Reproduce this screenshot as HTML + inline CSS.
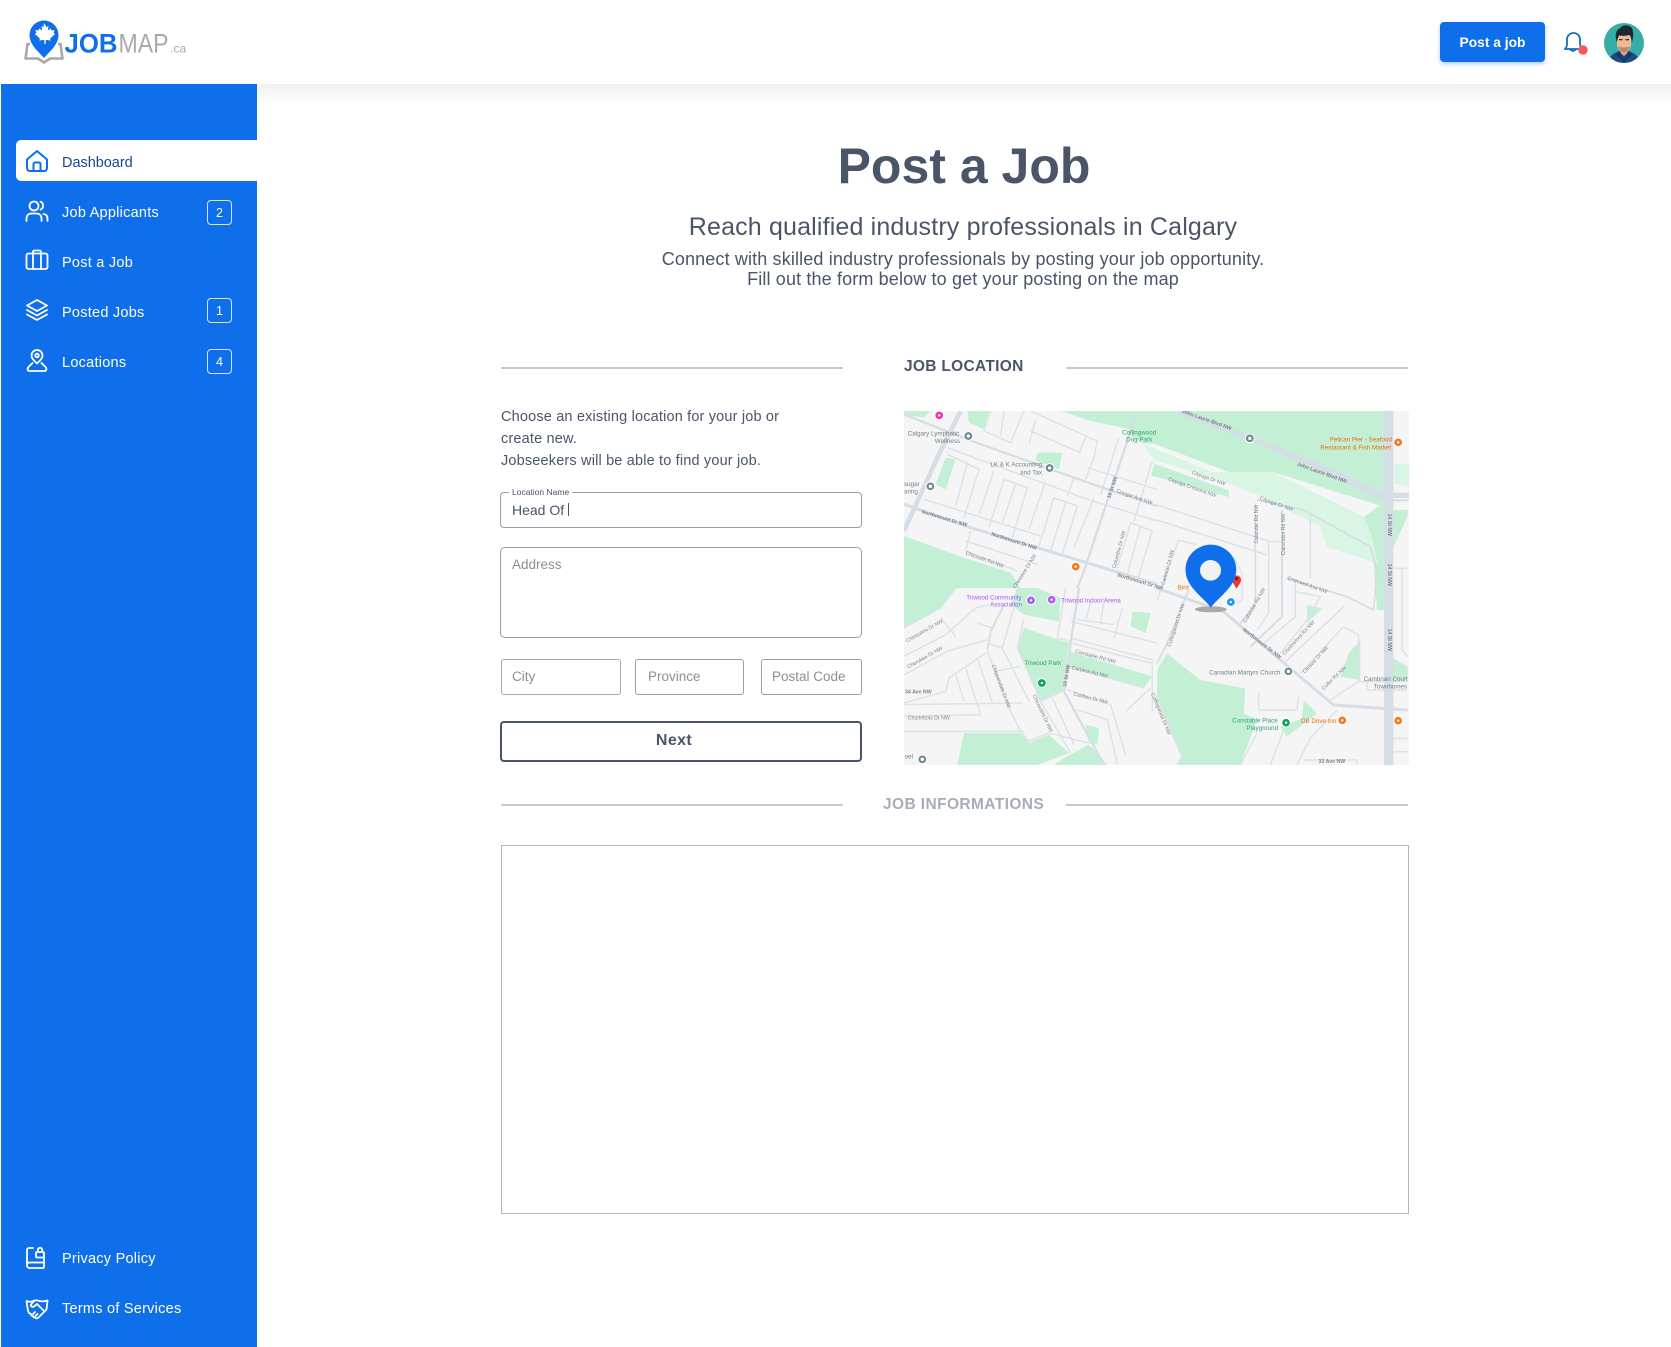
<!DOCTYPE html>
<html lang="en"><head><meta charset="utf-8"><title>Post a Job</title>
<style>
*{box-sizing:border-box}
html,body{margin:0;padding:0;background:#fff}
body{width:1671px;height:1347px;position:relative;overflow:hidden;font-family:"Liberation Sans",sans-serif;color:#4a5568}
.t{position:absolute;white-space:nowrap;line-height:20px;height:20px}
.c{text-align:center}
.nav{color:#fff;font-size:14.5px;left:62px;letter-spacing:.25px}
.badge{position:absolute;left:207px;width:25px;height:25px;border:1.5px solid #d5e5fc;border-radius:4px;color:#fff;font-size:12.5px;text-align:center;line-height:24px}
.ic{position:absolute;left:25px;width:24px;height:24px;fill:none;stroke:#fff;stroke-width:1.8;stroke-linecap:round;stroke-linejoin:round}
.box{position:absolute;border:1.5px solid #9a9fa6;background:#fff}
.ph{color:#8b8f94;font-size:13.5px;letter-spacing:0}
.line{position:absolute;height:2px;background:#c9cacc}
</style></head><body>

<div style="position:absolute;left:257px;right:0;top:84px;height:22px;background:linear-gradient(#f1f1f1,#fff)"></div>
<div style="position:absolute;left:1px;top:84px;width:256px;height:1263px;background:#0f6feb"></div>

<!-- logo -->
<svg style="position:absolute;left:20px;top:15px" width="180" height="55" viewBox="0 0 180 55">
<path d="M10 29H7.500L5.500 43.500 18 43.500 24 47.500 30 43.500 42.500 43.500 40.500 29H38" fill="none" stroke="#a9a9a9" stroke-width="2.600" stroke-linejoin="round"/>
<path d="M24 43C19 37 9.500 30 9.500 20a14.500 14.500 0 0 1 29 0c0 10-9.500 17-14.500 23z" fill="#0f6feb"/>
<path d="M24 8l2.500 4 2-.8-.7 4.300 3-2 .8 2 3-.5-1 3 1.500 1-5 4.500.6 2-5-.6v4h-1.400v-4l-5 .6.600-2-5-4.500 1.500-1-1-3 3 .5.800-2 3 2-.7-4.300 2 .8z" fill="#fff"/>
<text x="44.500" y="37.500" font-family="Liberation Sans" font-weight="700" font-size="27" fill="#0f6feb" textLength="53" lengthAdjust="spacingAndGlyphs">JOB</text>
<text x="98.500" y="37.500" font-family="Liberation Sans" font-size="27" fill="#a9a9a9" textLength="50" lengthAdjust="spacingAndGlyphs">MAP</text>
<text x="150" y="37.500" font-family="Liberation Sans" font-size="12" fill="#a9a9a9">.ca</text>
</svg>

<!-- header right -->
<div style="position:absolute;left:1440px;top:22px;width:105px;height:40px;background:#0f6feb;border-radius:4px;box-shadow:0 2px 4px rgba(15,111,235,.35);color:#fff;font-weight:700;font-size:13.800px;text-align:center;line-height:41px">Post a job</div>
<svg style="position:absolute;left:1559px;top:28px" width="34" height="30" viewBox="0 0 34 30" fill="none" stroke="#0f6fb8" stroke-width="1.800" stroke-linecap="round" stroke-linejoin="round">
<path d="M6 21c1.500-1.500 2-3 2-5v-4.500a6.500 6.500 0 0 1 13 0V16c0 1 .5 2 1.500 3"/><path d="M6 21h13"/><path d="M11.500 21.500a3 3 0 0 0 5 0"/>
<circle cx="24" cy="22" r="4.700" fill="#f8575d" stroke="none"/></svg>
<svg style="position:absolute;left:1604px;top:23px" width="40" height="40" viewBox="0 0 40 40">
<defs><clipPath id="av"><circle cx="20" cy="20" r="20"/></clipPath></defs>
<g clip-path="url(#av)"><rect width="40" height="40" fill="#35aeaa"/>
<path d="M4 40c1-8 7-11 16-13 9 2 15 5 16 13z" fill="#1d4a80"/><path d="M16 25h8l-.5 5-3.500 3-3.500-3z" fill="#e0a988"/>
<path d="M15.500 28l4.500 7 4.500-7 4 2.500-8.500 9.500-8.500-9.500z" fill="#173a68"/>
<path d="M13 11h14v11c0 4-4 7.500-7 7.500s-7-3.500-7-7.500z" fill="#efb995"/><path d="M14 23c1 4 4 6.500 6 6.500s5-2.500 6-6.500c-2 2-10 2-12 0z" fill="#b9876a"/>
<path d="M12.500 19c-2-8 0-13 4-14 1-3 8-3.500 10-1 3 1 3.500 9 1.500 15-.5-3-1-5-2.500-7-4 1-8 1-10.500.5-1 2-1.500 4-2.500 6.500z" fill="#1c2733"/>
<rect x="15" y="16" width="3.500" height="1.300" fill="#3b3030"/><rect x="21.500" y="16" width="3.500" height="1.300" fill="#3b3030"/></g></svg>

<!-- sidebar -->
<div style="position:absolute;left:16px;top:140px;width:241px;height:41px;background:#fff;border-radius:5px 0 0 5px"></div>
<svg class="ic" style="top:149px;stroke:#0f6feb;stroke-width:2" viewBox="0 0 24 24"><path d="M2 10.500L12 2l10 8.500V19a3 3 0 0 1-3 3H5a3 3 0 0 1-3-3z"/><path d="M8.500 22v-7a1.500 1.500 0 0 1 1.500-1.500h4a1.500 1.500 0 0 1 1.500 1.500v7"/></svg>
<div class="t" style="left:62px;top:153px;font-size:14.500px;color:#17478f;letter-spacing:-.03px">Dashboard</div>

<svg class="ic" style="top:199px" viewBox="0 0 24 24"><circle cx="9" cy="7" r="4.500"/><path d="M1.500 22v-2.500c0-3 2-5 5-5h5c3 0 5 2 5 5V22"/><path d="M15.500 2.800c3 .6 3.800 6.200 0 7.800"/><path d="M18.500 15c2.500.4 4 2 4 4.500V22"/></svg>
<div class="t nav" style="top:203px">Job Applicants</div>
<div class="badge" style="top:200px">2</div>

<svg class="ic" style="top:248px" viewBox="0 0 24 24"><rect x="1.500" y="5.500" width="21" height="15.500" rx="2"/><path d="M8 21V4a1.500 1.500 0 0 1 1.500-1.500h5A1.500 1.500 0 0 1 16 4v17"/></svg>
<div class="t nav" style="top:253px">Post a Job</div>

<svg class="ic" style="top:298px" viewBox="0 0 24 24"><path d="M12 2L2 7.500 12 13l10-5.500z"/><path d="M2 12l10 5.500L22 12"/><path d="M2 16.500L12 22l10-5.500"/></svg>
<div class="t nav" style="top:303px">Posted Jobs</div>
<div class="badge" style="top:298px">1</div>

<svg class="ic" style="top:349px" viewBox="0 0 24 24"><path d="M12 14.500c-3-3-5.500-5-5.500-8a5.500 5.500 0 0 1 11 0c0 3-2.500 5-5.500 8z"/><circle cx="12" cy="6.500" r="1.800"/><path d="M7.500 14L3.500 18c-1.500 1.500-1 4 1 4h15c2 0 2.500-2.500 1-4l-4-4"/></svg>
<div class="t nav" style="top:353px">Locations</div>
<div class="badge" style="top:349px">4</div>

<svg class="ic" style="top:1246px;left:24px" viewBox="0 0 24 24"><path d="M9 2H5a2 2 0 0 0-2 2v15.500A2.500 2.500 0 0 0 5.500 22H19a1 1 0 0 0 1-1V9"/><path d="M3 19a2.500 2.500 0 0 1 2.500-2.500H20"/><rect x="12" y="6" width="8" height="5.500" rx="1"/><path d="M13.800 6V4a2.200 2.200 0 0 1 4.400 0v2"/></svg>
<div class="t nav" style="top:1249px">Privacy Policy</div>
<svg class="ic" style="top:1297px" viewBox="0 0 24 24"><path d="M1.500 4c3 1 6 1 8-.5 3-.5 4.500.5 5 .5 2.500.5 5 .5 8-.5l-1 9-8 8c-1 1.300-2.500 1-3 0-1.300.3-2.500-.3-2.500-1.500-1.300 0-2.300-1-2-2-2-.5-2.500-1.500-3-3z"/><path d="M9.500 3.500L6 7.500c-.8 1.500 1.500 3 3 2l3-2.500 7 7"/><path d="M8 17l2-2M10.500 19l2-2"/></svg>
<div class="t nav" style="top:1299px">Terms of Services</div>

<!-- titles -->
<div class="t c" style="left:664px;width:600px;top:137px;height:58px;line-height:58px;font-size:50px;font-weight:700">Post a Job</div>
<div class="t c" style="left:663px;width:600px;top:213px;height:28px;line-height:28px;font-size:25px;letter-spacing:.16px">Reach qualified industry professionals in Calgary</div>
<div class="t c" style="left:563px;width:800px;top:249px;font-size:18px;letter-spacing:.14px">Connect with skilled industry professionals by posting your job opportunity.</div>
<div class="t c" style="left:563px;width:800px;top:269px;font-size:18px;letter-spacing:.14px">Fill out the form below to get your posting on the map</div>

<!-- section heads -->
<div class="line" style="left:501px;top:367px;width:342px"></div>
<div class="line" style="left:1066px;top:367px;width:342px"></div>
<div class="t" style="left:904px;top:357px;font-size:15.500px;font-weight:700;letter-spacing:.3px">JOB LOCATION</div>

<!-- intro -->
<div class="t" style="left:501px;top:407px;font-size:14.500px;letter-spacing:.17px">Choose an existing location for your job or</div>
<div class="t" style="left:501px;top:429px;font-size:14.500px;letter-spacing:.17px">create new.</div>
<div class="t" style="left:501px;top:451px;font-size:14.500px;letter-spacing:.17px">Jobseekers will be able to find your job.</div>

<!-- form -->
<div class="box" style="left:500px;top:492px;width:362px;height:36px;border-radius:4px"></div>
<div class="t" style="left:509px;top:482px;background:#fff;padding:0 3px;font-size:8.500px;color:#4a5568">Location Name</div>
<div class="t" style="left:512px;top:500px;font-size:14px">Head Of</div>
<div style="position:absolute;left:568px;top:503px;width:1px;height:13px;background:#4a5568"></div>
<div class="box" style="left:500px;top:547px;width:362px;height:91px;border-radius:5px"></div>
<div class="t ph" style="left:512px;top:555px">Address</div>
<div class="box" style="left:501px;top:659px;width:120px;height:36px;border-radius:3px;border-color:#aaa"></div>
<div class="t ph" style="left:512px;top:667px">City</div>
<div class="box" style="left:635px;top:659px;width:109px;height:36px;border-radius:3px"></div>
<div class="t ph" style="left:648px;top:667px">Province</div>
<div class="box" style="left:761px;top:659px;width:101px;height:36px;border-radius:3px"></div>
<div class="t ph" style="left:772px;top:667px">Postal Code</div>
<div style="position:absolute;left:500px;top:721px;width:362px;height:41px;border:2.500px solid #4a5568;border-radius:4px"></div>
<div class="t c" style="left:600px;width:148px;top:730.5px;font-size:16px;font-weight:700;letter-spacing:.4px">Next</div>

<!-- map -->
<svg style="position:absolute;left:904px;top:411px;filter:blur(.3px)" width="505" height="354" viewBox="41 32 1491 1062" preserveAspectRatio="none" font-family="Liberation Sans">
<rect x="41" y="32" width="1491" height="1062" fill="#f5f5f5"/>
<path d="M730 32H1460V320L1130 215 1000 215 780 130 745 130 700 100z" fill="#c3efd4"/>
<g fill="#c3efd4" transform="translate(41,32) scale(.984,1)">
<path d="M470 0H700L680 55 560 30z"/>
<path d="M0 0H80L60 20 0 10z"/><path d="M190 0H255L240 55 195 35z"/>
<path d="M400 125H475L465 175 395 150z"/>
<path d="M125 140L155 145 125 235 95 220z"/>
<path d="M0 375L180 440 320 485 350 531H0z"/>
</g>
<g fill="#c3efd4" transform="translate(41,563) scale(.984,1)">
<path d="M0 0H155L110 60 0 120z"/>
<path d="M340 0H400L470 30 465 100 360 80 320 50z"/>
<path d="M360 120L495 165 475 310 410 340 340 180z"/>
<path d="M495 190L745 265 720 300 490 235z"/>
<path d="M545 410L585 420 580 470 555 465z"/>
<path d="M180 435H350L375 465 435 440 495 495 400 531H160z"/>
<path d="M480 510L555 470 610 531H450z"/>
<path d="M685 70L740 75 725 135 680 115z"/>
</g>
<g fill="#c3efd4" transform="translate(788,299) scale(.984,1)">
<path d="M30 460L130 540 265 565 260 640 300 660 250 795H60L75 770 0 600V510z"/>
<path d="M440 600L480 640 390 710 370 680 435 655z"/>
<path d="M575 460L610 420V540L550 530z"/>
<path d="M700 470L752 500V540H700z"/>
<path d="M450 315L495 325 450 370z"/>
<path d="M705 30H752V50L705 150z"/>
<path d="M610 60L690 0V330H660L650 190z"/>
</g>
<path d="M745 130L950 215 1130 215 1400 350 1420 400 1440 490 1290 440 1270 380 1100 290 950 230 780 180z" fill="#d8f6e3"/>
<path d="M1490 190H1532V260L1490 250z" fill="#d8f6e3"/>
<path d="M780 190L1000 270 1000 290 770 225z" fill="#c3efd4"/>

<g fill="none" stroke="#dde2e8" stroke-width="4.500" stroke-linejoin="round" transform="translate(41,32) scale(.984,1)">
<path d="M380 0L580 90 570 140 545 205M395 25L375 100M380 60L530 125M545 80L525 125"/>
<path d="M260 0L240 60M300 0L290 75M360 0L320 95M240 60L320 95"/>
<path d="M130 130L225 175 180 320M190 155L155 285M270 180L225 310"/>
<path d="M300 205L370 230 325 380M300 205L255 350M335 220L295 335M425 210L375 355"/>
<path d="M450 260L520 285 475 430M450 260L405 405M485 275L440 420M510 200L490 255M570 260L510 410"/>
<path d="M680 335L745 360 700 510M680 335L640 470M710 345L670 490"/>
<path d="M60 265L410 375M130 110L550 265 759 330M550 170L759 235"/>
<path d="M200 360L185 420 340 480M185 390L400 460M645 80L590 250M745 150L690 330"/>
</g>
<g fill="none" stroke="#dde2e8" stroke-width="4.500" stroke-linejoin="round" transform="translate(41,563) scale(.984,1)">
<path d="M485 0L460 150 500 160M360 90L340 180 410 340 475 310M330 60L295 180 375 340"/>
<path d="M250 165L295 180M250 190L320 370 350 430 375 460 435 435 555 465M445 330L510 470M410 340L500 495"/>
<path d="M0 120L110 60 155 0M0 205L125 140 215 60 255 50M0 260L130 190 250 155M0 345L125 310 135 270 245 195"/>
<path d="M0 350L355 345M0 430H360M0 385L230 380 185 240M155 260L180 340M220 210L265 345M220 105L265 120M110 90L155 145M275 250L350 235"/>
<path d="M500 100L759 165M500 150L745 215V370M500 165L740 225M490 235L720 300M490 305L620 350 665 500M520 365L610 395 640 531M665 370L740 300"/>
<path d="M560 40L545 100M600 30L590 110M655 60L630 150M520 95L630 110"/>
</g>
<g fill="none" stroke="#dde2e8" stroke-width="4.500" stroke-linejoin="round" transform="translate(788,299) scale(.984,1)">
<path d="M0 15L340 125H380M0 60L330 165M65 120L120 135M65 120L0 300M230 170L255 220V300L220 320"/>
<path d="M335 125V340L300 390M415 235V350L320 430M460 45V235"/>
<path d="M560 380L605 405V545L520 600M560 380L430 520M415 275L490 290 450 360 370 460M560 320L380 490M605 545H752M630 545V570H750M305 580V630H420L425 590"/>
<path d="M540 630L460 715 420 795M440 780H600V795M250 795L300 700M340 795L380 690M700 715H752M700 755H752M735 205V450L752 470M700 205H752"/>
<path d="M0 600L75 770 60 795"/>
</g>
<g fill="none" stroke="#d5dde5" stroke-linejoin="round" transform="translate(41,32) scale(.984,1)">
<path d="M170 0L100 140 0 360" stroke-width="14"/>
<path d="M0 10L190 85 440 175 610 235 759 285" stroke-width="7"/>
<path d="M0 280L200 350 500 440 759 520" stroke-width="9"/>
<path d="M700 0L610 270 540 480 520 531" stroke-width="7"/>
</g>
<g fill="none" stroke="#d5dde5" stroke-linejoin="round" transform="translate(41,563) scale(.984,1)">
<path d="M525 0L505 130 480 310 600 531" stroke-width="7"/>
<path d="M300 50L260 130 250 185" stroke-width="6"/>
</g>
<g fill="none" stroke="#d5dde5" stroke-linejoin="round" transform="translate(788,299) scale(.984,1)">
<path d="M0 265L200 335 370 480 530 615 752 630" stroke-width="9"/>
<path d="M300 0L440 30 640 140 660 210 650 330 570 290 390 235" stroke-width="5"/>
<path d="M375 30V350L280 440" stroke-width="6"/>
<path d="M295 10V310L250 370" stroke-width="5"/>
<path d="M0 490L30 430 95 270" stroke-width="5"/>
</g>
<path d="M850 32L1180 160 1460 285H1532" fill="none" stroke="#d5dde5" stroke-width="16"/>
<path d="M1180 170L1460 300H1532" fill="none" stroke="#d5dde5" stroke-width="6"/>
<path d="M1472 32V1094" fill="none" stroke="#d5dde5" stroke-width="28"/>

<g font-size="18.500" fill="#5f6b70" opacity=".85">
<text x="52" y="105">Calgary Lymphatic</text><text x="132" y="128">Wellness</text>
<text x="296" y="199">LK &amp; K Accounting</text><text x="384" y="222">and Tax</text>
<text x="41" y="257">sugar</text><text x="41" y="279">aring</text>
<text x="942" y="822">Canadian Martyrs Church</text>
<text x="1398" y="842">Cambrian Court</text><text x="1428" y="864">Townhomes</text>
<text x="43" y="1075">oel</text>
</g>
<g font-size="15.500" font-weight="700" fill="#5f6b70" opacity=".8">
<text transform="rotate(17 92 338)" x="92" y="338">Northmount Dr NW</text>
<text transform="rotate(18 298 405)" x="298" y="405">Northmount Dr NW</text>
<text transform="rotate(17 670 528)" x="670" y="528">Northmount Dr NW</text>
<text transform="rotate(38 1040 690)" x="1040" y="690">Northmount Dr NW</text>
<text transform="rotate(20 1200 195)" x="1200" y="195">John Laurie Blvd NW</text>
<text transform="rotate(20 860 36)" x="860" y="36">John Laurie Blvd NW</text>
<text transform="rotate(-72 650 295)" x="650" y="295">19 St NW</text>
<text transform="rotate(-80 520 860)" x="520" y="860">19 St NW</text>
<text transform="rotate(90 1470 340)" x="1470" y="340">14 St NW</text>
<text transform="rotate(90 1470 490)" x="1470" y="490">14 St NW</text>
<text transform="rotate(90 1470 685)" x="1470" y="685">14 St NW</text>
<text x="52" y="957" font-weight="400">Charlebois Dr NW</text>
<text x="44" y="880">34 Ave NW</text>
<text x="1265" y="1088">32 Ave NW</text>
<text transform="rotate(15 545 757)" x="545" y="757" font-weight="400">Constable Rd NW</text>
<text transform="rotate(14 535 806)" x="535" y="806" font-weight="400">Carbera Rd NW</text>
<text transform="rotate(14 540 885)" x="540" y="885" font-weight="400">Caribou Dr NW</text>
<text transform="rotate(20 1172 537)" x="1172" y="537" font-weight="400">Cromwell Ave NW</text>
<text transform="rotate(20 668 275)" x="668" y="275" font-weight="400">Cougar Ave NW</text>
<text transform="rotate(20 222 462)" x="222" y="462" font-weight="400">Chicoutin Rd NW</text>
<text transform="rotate(-58 370 565)" x="370" y="565" font-weight="400">Cherokee Dr NW</text>
<text transform="rotate(-30 50 727)" x="50" y="727" font-weight="400">Chinoutimi Dr NW</text>
<text transform="rotate(-30 54 805)" x="54" y="805" font-weight="400">Cherokee Dr NW</text>
<text transform="rotate(-75 665 505)" x="665" y="505" font-weight="400">Columbia Dr NW</text>
<text transform="rotate(-75 810 555)" x="810" y="555" font-weight="400">Carleton Dr NW</text>
<text transform="rotate(-72 828 740)" x="828" y="740" font-weight="400">Collingwood Dr NW</text>
<text transform="rotate(68 770 880)" x="770" y="880" font-weight="400">Collingwood Dr NW</text>
<text transform="rotate(70 300 795)" x="300" y="795" font-weight="400">Chippendale Dr NW</text>
<text transform="rotate(65 420 885)" x="420" y="885" font-weight="400">Chicoutimi Dr NW</text>
<text transform="rotate(20 890 220)" x="890" y="220" font-weight="400">Cayuga Dr NW</text>
<text transform="rotate(20 820 240)" x="820" y="240" font-weight="400">Cayuga Crescent NW</text>
<text transform="rotate(20 1090 297)" x="1090" y="297" font-weight="400">Cayuga Dr NW</text>
<text transform="rotate(-90 1086 430)" x="1086" y="430" font-weight="400">Calandar Rd NW</text>
<text transform="rotate(-90 1166 465)" x="1166" y="465" font-weight="400">Clarendon Rd NW</text>
<text transform="rotate(-60 1050 668)" x="1050" y="668" font-weight="400">Calandar Rd NW</text>
<text transform="rotate(-48 1165 765)" x="1165" y="765" font-weight="400">Chelmsford Rd NW</text>
<text transform="rotate(-48 1225 820)" x="1225" y="820" font-weight="400">Cleaver Dr NW</text>
<text transform="rotate(-45 1280 870)" x="1280" y="870" font-weight="400">Cutler Rd NW</text>
</g>
<g font-size="18.500">
<text x="1298" y="124" fill="#e8710a">Pelican Pier - Seafood</text><text x="1270" y="148" fill="#e8710a">Restaurant &amp; Fish Market</text>
<text x="1212" y="968" fill="#e8710a">OB Drive Inn</text>
<text x="225" y="597" fill="#a855f7">Triwood Community</text><text x="295" y="619" fill="#a855f7">Association</text>
<text x="505" y="606" fill="#a855f7">Triwood Indoor Arena</text>
<text x="397" y="794" fill="#2fa56f">Triwood Park</text>
<text x="1010" y="967" fill="#2fa56f">Constable Place</text><text x="1052" y="989" fill="#2fa56f">Playground</text>
<text x="685" y="102" fill="#2fa56f">Collingwood</text><text x="697" y="124" fill="#2fa56f">Dog Park</text>
<text x="849" y="568" fill="#e8710a">Bird</text>
</g>
<g stroke="#fff" stroke-width="3">
<circle cx="231" cy="107" r="13" fill="#708890"/><circle cx="471" cy="203" r="13" fill="#708890"/><circle cx="119" cy="258" r="13" fill="#708890"/><circle cx="1062" cy="114" r="13" fill="#708890"/><circle cx="1176" cy="813" r="13" fill="#708890"/><circle cx="95" cy="1077" r="13" fill="#708890"/>
<circle cx="145" cy="45" r="13" fill="#ec38b0"/>
<circle cx="548" cy="499" r="13" fill="#f47b1f"/><circle cx="1500" cy="126" r="13" fill="#f47b1f"/><circle cx="1335" cy="960" r="13" fill="#f47b1f"/><circle cx="1500" cy="961" r="13" fill="#f47b1f"/>
<circle cx="416" cy="600" r="13" fill="#ab5ff0"/><circle cx="477" cy="598" r="13" fill="#ab5ff0"/>
<circle cx="448" cy="848" r="13" fill="#12a267"/><circle cx="1169" cy="967" r="13" fill="#12a267"/>
<circle cx="1006" cy="605" r="13" fill="#1a9bf0"/>
</g>
<g fill="#fff"><circle cx="231" cy="107" r="5"/><circle cx="471" cy="203" r="5"/><circle cx="119" cy="258" r="5"/><circle cx="1062" cy="114" r="5"/><circle cx="1176" cy="813" r="5"/><circle cx="95" cy="1077" r="5"/><circle cx="548" cy="499" r="3.500"/><circle cx="1500" cy="126" r="3.500"/><circle cx="1335" cy="960" r="3.500"/><circle cx="1500" cy="961" r="3.500"/><circle cx="416" cy="600" r="3.500"/><circle cx="477" cy="598" r="3.500"/><circle cx="448" cy="848" r="3.500"/><circle cx="1169" cy="967" r="3.500"/><circle cx="1006" cy="605" r="3.500"/><circle cx="145" cy="45" r="3.500"/></g>
<path d="M1023 565c-6-11-13-17-13-27a13 13 0 0 1 26 0c0 10-7 16-13 27z" fill="#e53935"/><circle cx="1023" cy="535" r="5" fill="#8a1c1c"/>
<ellipse cx="947" cy="627" rx="47" ry="9" fill="#a9a9a9"/>
<path d="M947 622C925 590 872 560 872 508a75 75 0 0 1 150 0c0 52-53 82-75 114z" fill="#0f6feb"/>
<circle cx="946" cy="510" r="31" fill="#f0f3f4"/>
</svg>

<!-- job informations -->
<div class="line" style="left:501px;top:804px;width:342px"></div>
<div class="line" style="left:1066px;top:804px;width:342px"></div>
<div class="t" style="left:883px;top:795px;font-size:15.500px;font-weight:700;color:#a7adb8;letter-spacing:.4px">JOB INFORMATIONS</div>
<div style="position:absolute;left:500.5px;top:845px;width:908px;height:369px;border:1.500px solid #b4b5b7;background:#fff"></div>

</body></html>
